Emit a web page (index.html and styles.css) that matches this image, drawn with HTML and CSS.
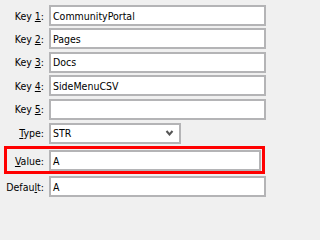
FILE: index.html
```html
<!DOCTYPE html>
<html>
<head>
<meta charset="utf-8">
<link rel="stylesheet" href="styles.css">
</head>
<body>
<div class="form">
  <div class="row"><label class="lbl">Key <u>1</u>:</label><div class="field">CommunityPortal</div></div>
  <div class="row"><label class="lbl">Key <u>2</u>:</label><div class="field">Pages</div></div>
  <div class="row"><label class="lbl">Key <u>3</u>:</label><div class="field">Docs</div></div>
  <div class="row"><label class="lbl">Key <u>4</u>:</label><div class="field">SideMenuCSV</div></div>
  <div class="row"><label class="lbl">Key <u>5</u>:</label><div class="field"></div></div>
  <div class="row row-select"><label class="lbl"><u>T</u>ype:</label>
    <div class="field select"><span>STR</span>
      <svg class="chev" width="9" height="6" viewBox="0 0 9 6"><path d="M1.5 1 L4.5 4.5 L7.5 1" fill="none" stroke="#555" stroke-width="2"/></svg>
    </div>
  </div>
  <div class="row row-hl"><label class="lbl"><u>V</u>alue:</label><div class="field">A</div></div>
  <div class="row row-last"><label class="lbl">Defau<u>l</u>t:</label><div class="field">A</div></div>
</div>
</body>
</html>
```
FILE: styles.css
```css
html, body {
  margin: 0;
  padding: 0;
  background: #f0f0f0;
}
body {
  width: 271px;
  height: 202px;
  overflow: hidden;
  font-family: "DejaVu Sans Condensed", "DejaVu Sans", sans-serif;
  font-size: 10.5px;
  color: #000;
}
.form {
  padding: 5px 5px 0 0;
  display: flex;
  flex-direction: column;
  gap: 2.4px;
}
.row {
  display: grid;
  grid-template-columns: 44px 1fr;
  column-gap: 5px;
  align-items: center;
  height: 21px;
}
.lbl {
  text-align: right;
  white-space: nowrap;
  color: #000;
}
.lbl u {
  text-underline-offset: 1px;
}
.field {
  box-sizing: border-box;
  height: 21px;
  border: 2px solid #b4b4b6;
  background: #fff;
  padding: 0 2px;
  display: flex;
  align-items: center;
  white-space: nowrap;
}
.row-select {
  margin-top: 1px;
}
.select {
  width: 132px;
  justify-content: space-between;
  padding-right: 5px;
}
.chev {
  display: block;
}
.row-hl {
  box-sizing: border-box;
  height: 28px;
  margin: 0 1px 0 4px;
  border: 3px solid #ff0000;
  padding: 1px;
  grid-template-columns: 36px 1fr;
}
.row-last {
  margin-top: -0.6px;
}
```
